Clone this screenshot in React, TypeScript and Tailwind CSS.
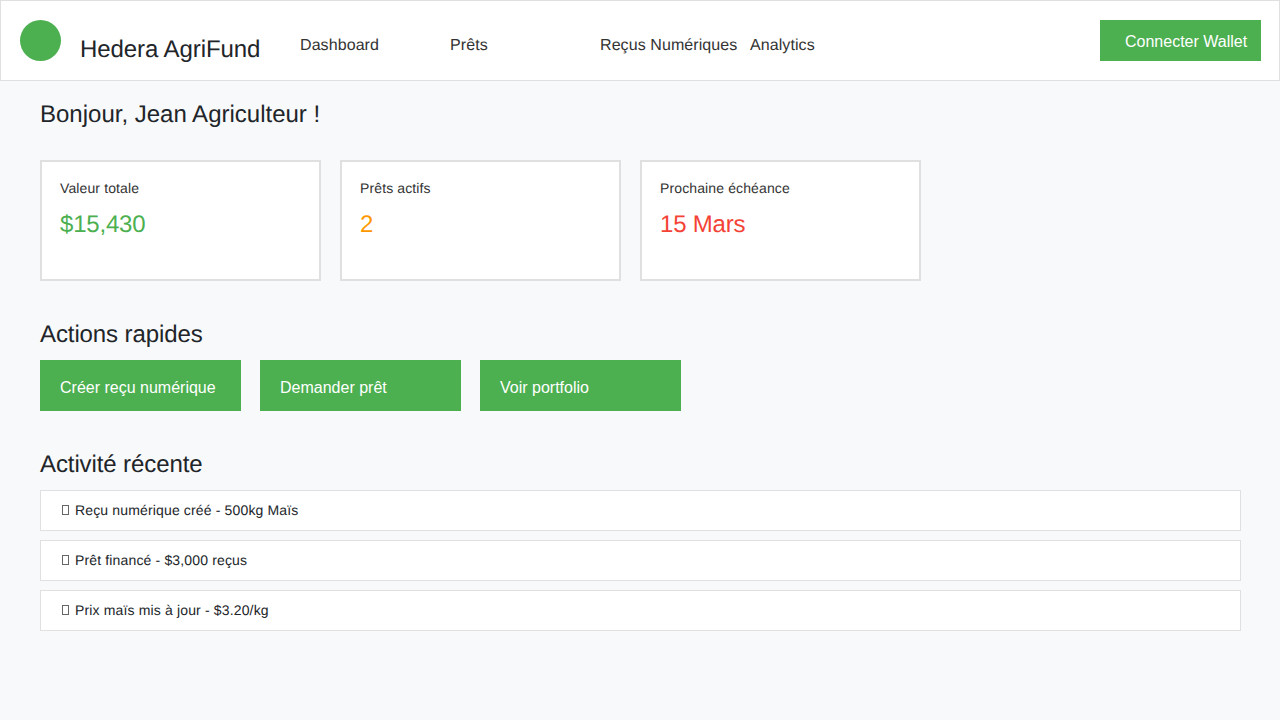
const navLinks = ["Dashboard", "Prêts", "Reçus Numériques", "Analytics"];

const stats = [
  { label: "Valeur totale", value: "$15,430", color: "text-[#4caf50]" },
  { label: "Prêts actifs", value: "2", color: "text-[#ff9800]" },
  { label: "Prochaine échéance", value: "15 Mars", color: "text-[#f44336]" },
];

const actions = ["Créer reçu numérique", "Demander prêt", "Voir portfolio"];

const activity = [
  "Reçu numérique créé - 500kg Maïs",
  "Prêt financé - $3,000 reçus",
  "Prix maïs mis à jour - $3.20/kg",
];

export default function App() {
  return (
    <div className="min-h-[720px] bg-[#f8f9fa] font-['Liberation_Sans',Arial,sans-serif] text-[#212529] [text-rendering:geometricPrecision]">
      <header className="flex h-[81px] items-start border border-[#e0e0e0] bg-white pl-[19px] pr-[18px] pt-[19px]">
        <div className="h-[41px] w-[41px] rounded-full bg-[#4caf50]" />
        <h1 className="ml-[19px] mt-[16px] w-[180px] whitespace-nowrap text-2xl leading-[28px] tracking-[-0.07px]">
          Hedera AgriFund
        </h1>
        <nav className="ml-10 mt-[16px] flex">
          {navLinks.map((link) => (
            <a key={link} className="w-[150px] whitespace-nowrap text-base leading-[19px] tracking-[0.08px] text-[#333]">
              {link}
            </a>
          ))}
        </nav>
        <button
          type="button"
          className="ml-auto h-[41px] w-[161px] bg-[#4caf50] pl-[25px] pt-[2px] text-left text-base text-white"
        >
          Connecter Wallet
        </button>
      </header>

      <main className="px-10">
        <h2 className="pt-[20px] text-2xl leading-[28px]">Bonjour, Jean Agriculteur !</h2>

        <section className="mt-[31px] flex gap-[19px]">
          {stats.map((stat) => (
            <div
              key={stat.label}
              className="h-[121px] w-[281px] border-2 border-[#e0e0e0] bg-white px-[18px] pt-[18px]"
            >
              <p className="text-sm leading-4 tracking-[0.12px] text-[#333]">{stat.label}</p>
              <p className={`mt-[15px] text-2xl leading-[28px] tracking-[-0.2px] ${stat.color}`}>{stat.value}</p>
            </div>
          ))}
        </section>

        <h2 className="mt-[40px] text-2xl leading-[28px] tracking-[-0.1px]">Actions rapides</h2>
        <section className="mt-[11px] flex gap-[19px]">
          {actions.map((action) => (
            <button
              key={action}
              type="button"
              className="h-[51px] w-[201px] bg-[#4caf50] pl-5 pt-[5px] text-left text-base text-white"
            >
              {action}
            </button>
          ))}
        </section>

        <h2 className="mt-[40px] text-2xl leading-[28px] tracking-[-0.1px]">Activité récente</h2>
        <section className="mt-[11px] flex w-[1201px] flex-col gap-[9px]">
          {activity.map((text) => (
            <div
              key={text}
              className="flex h-[41px] items-center border border-[#e0e0e0] bg-white pb-[2px] pl-[21px] text-sm tracking-[0.15px]"
            >
              <span className="mr-[6px] h-[10px] w-[7px] border border-[#666]" />
              {text}
            </div>
          ))}
        </section>
      </main>
    </div>
  );
}
